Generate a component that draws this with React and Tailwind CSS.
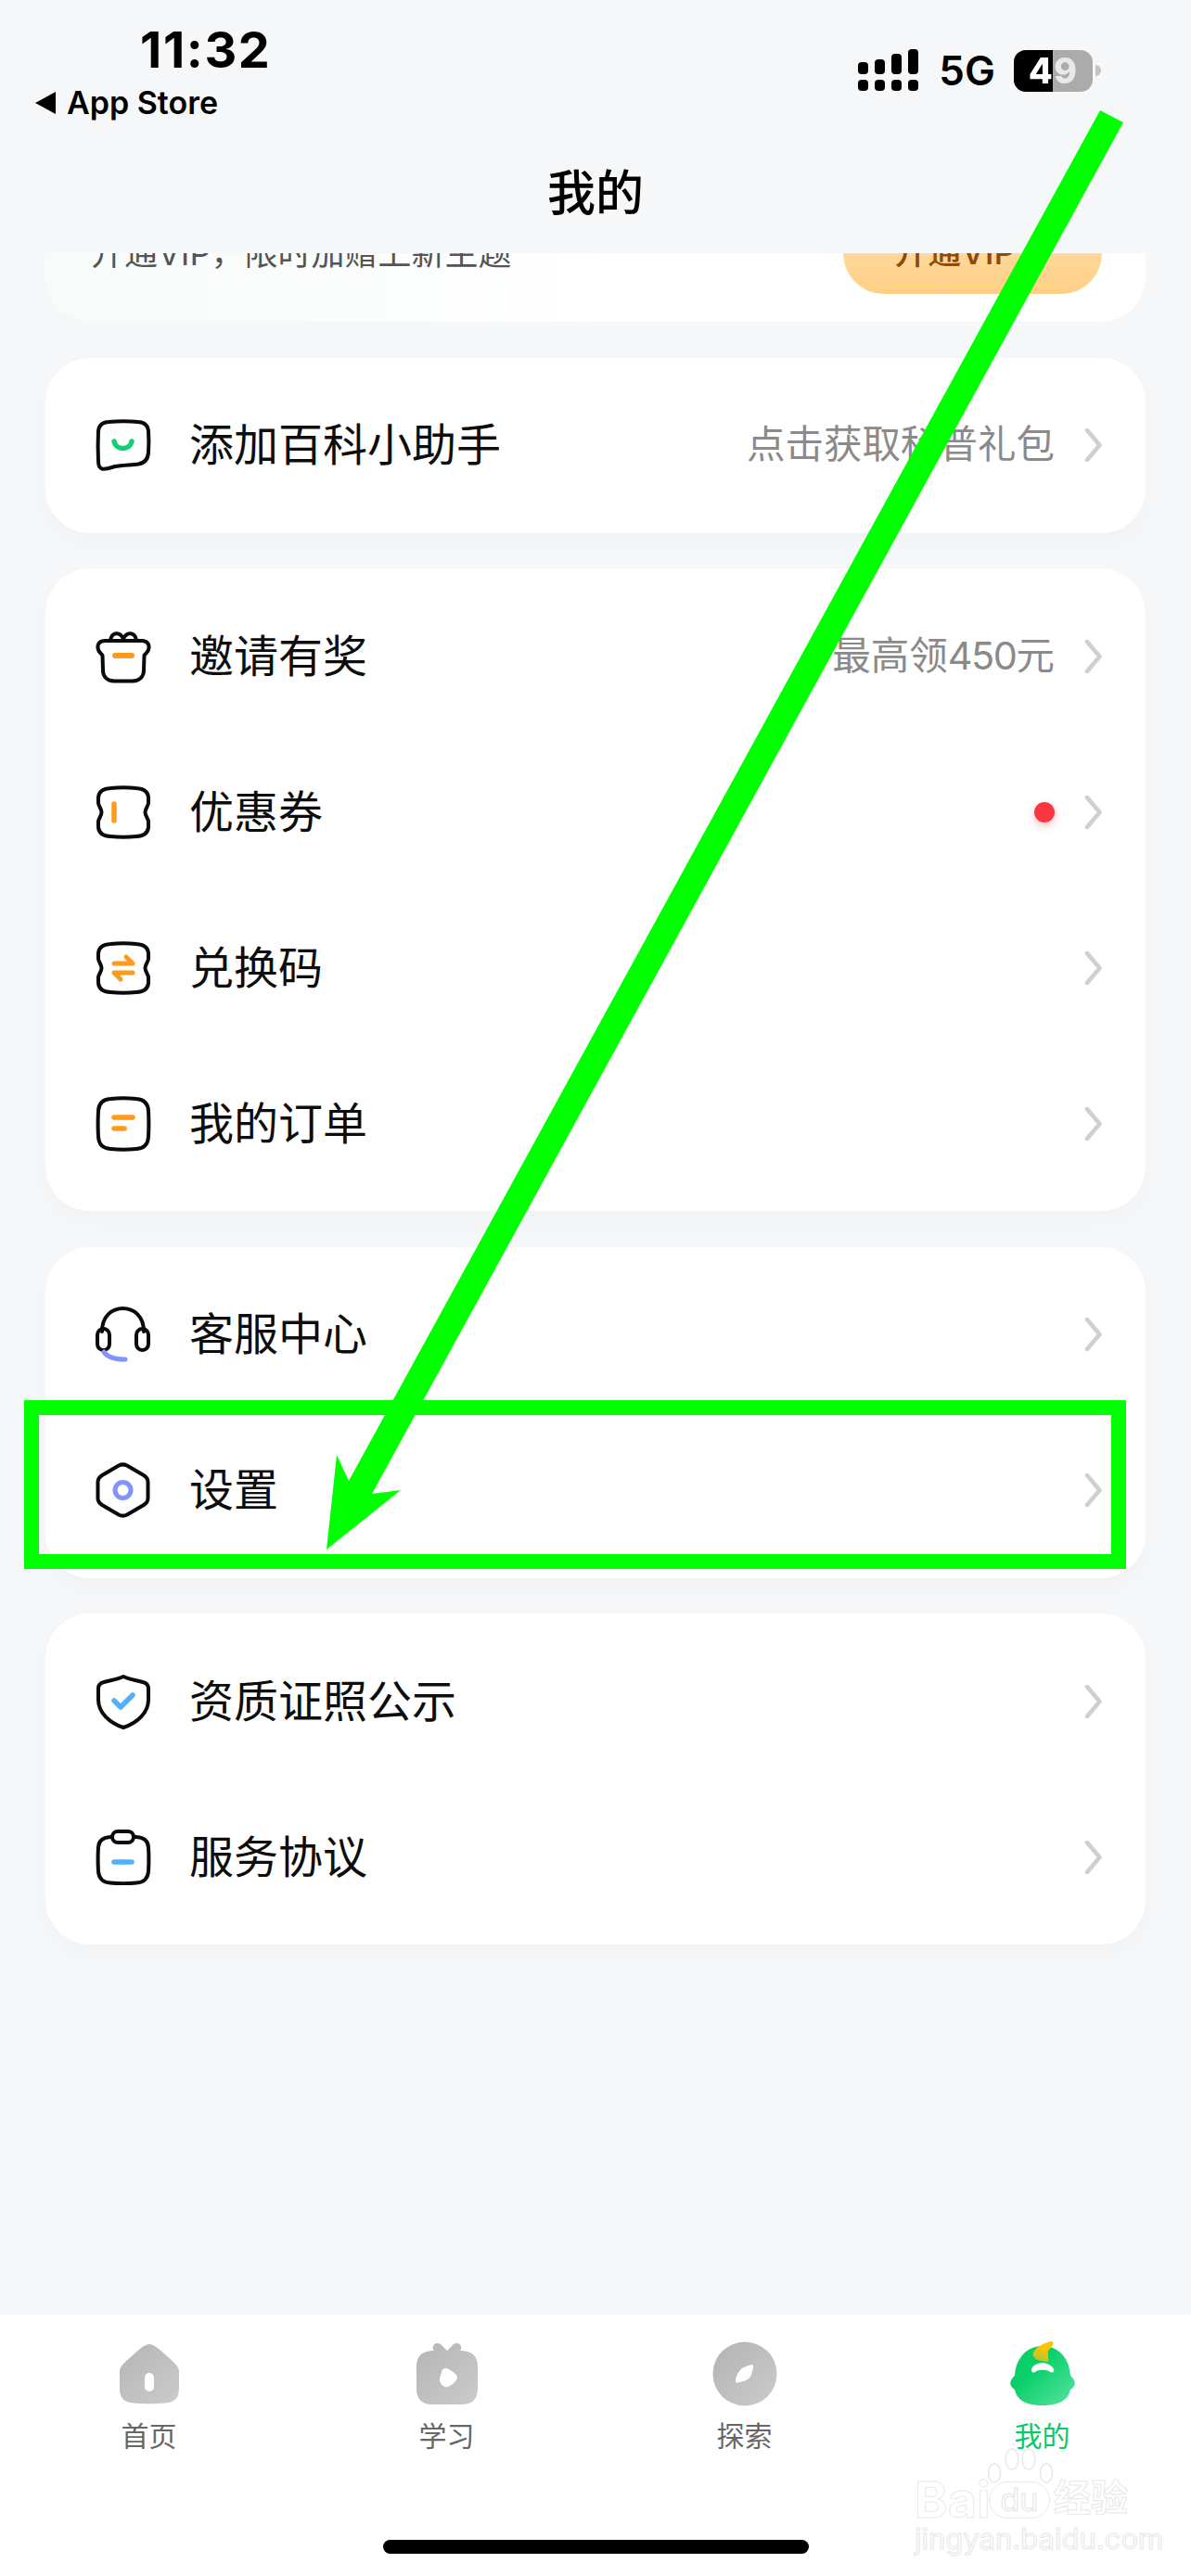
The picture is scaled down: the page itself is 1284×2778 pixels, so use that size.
const iconStroke = { fill: 'none', stroke: '#0a0a0a', strokeWidth: 4, strokeLinecap: 'round', strokeLinejoin: 'round' }

function Accent({ d, color, w = 5.5 }) {
  return <path d={d} fill="none" stroke={color} strokeWidth={w} strokeLinecap="round" strokeLinejoin="round" />
}

const couponPath =
  'M16 4 C25 3 35 3 44 4 C52 4.5 56.5 8 57 14 V20 C57 23 53.5 26 53.5 30 C53.5 34 57 37 57 40 V46 C56.5 52 52 55.5 44 56 C35 57 25 57 16 56 C8 55.5 3.5 52 3 46 V40 C3 37 6.5 34 6.5 30 C6.5 26 3 23 3 20 V14 C3.5 8 8 4.5 16 4 Z'

const squirclePath =
  'M16 3 C25 2 35 2 44 3 C52 3.5 56.5 8 57 16 C57.5 25 57.5 35 57 44 C56.5 52 52 56.5 44 57 C35 58 25 58 16 57 C8 56.5 3.5 52 3 44 C2.5 35 2.5 25 3 16 C3.5 8 8 3.5 16 3 Z'

const icons = {
  assistant: (
    <>
      <path {...iconStroke} d="M14 5 C24 4 36 4 46 5 C53 5.5 56.5 9 57 15 C57.5 22 57.5 31 57 38 C56.5 46 52 49.5 46 50.5 C38 51.5 28 51.5 21 53 C16 54.5 11 56.5 7 55.5 C3.5 54.5 3 51 3 47 C2.5 36 2.5 25 3 15 C3.5 9 7 5.5 14 5 Z" />
      <Accent d="M20 26 C22 36 37 36 39 26" color="#14cf72" />
    </>
  ),
  gift: (
    <>
      <path {...iconStroke} d="M10 13 H50 C55 13 58 16 57.5 21 C57 26 53 27 52.5 29 L52 45 C52 52 47 56 40 56.5 H20 C13 56 8 52 8 45 L7.5 29 C7 27 3 26 2.5 21 C2 16 5 13 10 13 Z" />
      <path {...iconStroke} d="M16 13 C17 4 26 2 30 11 C34 2 43 4 44 13" />
      <Accent d="M21 29 H39" color="#ff9a1a" w={6} />
    </>
  ),
  coupon: (
    <>
      <path {...iconStroke} d={couponPath} />
      <Accent d="M20 21 V39" color="#ff9a1a" />
    </>
  ),
  exchange: (
    <>
      <path {...iconStroke} d={couponPath} />
      <Accent d="M20 25 H40 L33 18" color="#ff9a1a" w={5} />
      <Accent d="M40 35 H20 L27 42" color="#ff9a1a" w={5} />
    </>
  ),
  order: (
    <>
      <path {...iconStroke} d={squirclePath} />
      <Accent d="M20 23 H40" color="#ff9a1a" />
      <Accent d="M20 35 H31" color="#ff9a1a" />
    </>
  ),
  headset: (
    <>
      <path {...iconStroke} d="M7 27 C7 10 18 2 29.5 2 C41 2 52 10 52 27" />
      <rect {...iconStroke} x="2" y="24" width="13" height="23" rx="6.5" />
      <rect {...iconStroke} x="44" y="24" width="13" height="23" rx="6.5" />
      <Accent d="M9 49 C13 55 20 57 32 57" color="#8292ff" w={5} />
    </>
  ),
  settings: (
    <>
      <path {...iconStroke} d="M25 3.5 C28 2 31 2 34 3.5 L52 14 C55 16 56.5 18 56.5 21 V39 C56.5 42 55 44 52 46 L34 56.5 C31 58 28 58 25 56.5 L7 46 C4 44 2.5 42 2.5 39 V21 C2.5 18 4 16 7 14 Z" />
      <circle cx="29.5" cy="30" r="8.5" fill="none" stroke="#8292ff" strokeWidth="5" />
    </>
  ),
  shield: (
    <>
      <path {...iconStroke} d="M30 3 C36 6 44 7 51 9 C55 10 57 12 57 16 V28 C57 42 45 53 30 58 C15 53 3 42 3 28 V16 C3 12 5 10 9 9 C16 7 24 6 30 3 Z" />
      <Accent d="M20 29 L27 36 L40 23" color="#4fb0ff" />
    </>
  ),
  clipboard: (
    <>
      <path {...iconStroke} d="M16 8 C25 7 35 7 44 8 C52 8.5 56.5 12 57 19 C57.5 27 57.5 37 57 45 C56.5 53 52 57 44 57.5 C35 58.5 25 58.5 16 57.5 C8 57 3.5 53 3 45 C2.5 37 2.5 27 3 19 C3.5 12 8 8.5 16 8 Z" />
      <rect {...iconStroke} x="18" y="2" width="23" height="12" rx="6" fill="#ffffff" />
      <Accent d="M20 35 H39" color="#4fb0ff" />
    </>
  ),
}

function Chevron() {
  return (
    <svg width="20" height="36" viewBox="0 0 20 36" className="shrink-0">
      <path d="M3 2 L16.5 18 L3 34" fill="none" stroke="#cfcfcf" strokeWidth="4.5" strokeLinecap="round" strokeLinejoin="round" />
    </svg>
  )
}

function Row({ icon, label, hint, dot }) {
  return (
    <div className="flex h-[168px] items-center pl-[54px] pr-[46px]">
      <svg width="60" height="60" viewBox="0 0 60 60" className="shrink-0">
        {icons[icon]}
      </svg>
      <span className="ml-[41px] text-[48px] leading-none text-[#0d0d0d]">{label}</span>
      <div className="ml-auto flex items-center gap-[32px]">
        {hint && <span className="text-[41.5px] leading-none text-[#8a8a8a]">{hint}</span>}
        {dot && <span className="h-[22px] w-[22px] rounded-full bg-[#fb3640] shadow-[0_4px_10px_rgba(251,54,64,0.3)]" />}
        <Chevron />
      </div>
    </div>
  )
}

function Card({ children }) {
  return <div className="rounded-[48px] bg-white py-[10.5px] shadow-[0_10px_24px_rgba(30,40,60,0.025)]">{children}</div>
}

function SignalDots() {
  const rows = [
    [0, 67, 11, 13],
    [18, 64, 11, 16],
    [36, 58, 11, 22],
    [54, 53, 11, 27],
  ]
  return (
    <svg width="66" height="46" viewBox="0 53 66 46">
      {rows.map(([x, y, w, h]) => (
        <g key={x} fill="#000">
          <rect x={x} y={y} width={w} height={h} rx="4" />
          <rect x={x} y="86" width={w} height="12" rx="4" />
        </g>
      ))}
    </svg>
  )
}

function Battery() {
  return (
    <div className="flex items-center">
      <div className="relative flex h-[45px] w-[85px] overflow-hidden rounded-[13px] bg-[#ababab]">
        <div className="w-[42px] bg-black" />
        <span className="absolute inset-0 flex items-center justify-center text-[38px] font-extrabold leading-none tracking-[1px] text-transparent bg-[linear-gradient(90deg,#ffffff_50%,#e9e9e9_50%)] bg-clip-text">
          49
        </span>
      </div>
      <div className="ml-[3px] h-[12px] w-[6px] rounded-r-full bg-[#c3c3c3]" />
    </div>
  )
}

function StatusBar() {
  return (
    <div className="flex items-start justify-between pr-[97px]">
      <div className="flex flex-col">
        <span className="ml-[151px] mt-[24px] h-[59px] text-[54px] font-bold leading-[59px] tracking-[1.6px] text-black">11:32</span>
        <div className="ml-[38px] mt-[8px] flex items-center gap-[12px]">
          <span className="h-0 w-0 border-y-[12px] border-r-[22px] border-y-transparent border-r-black" />
          <span className="text-[34px] font-semibold leading-[40px] text-black">App Store</span>
        </div>
      </div>
      <div className="mt-[53px] flex items-center">
        <SignalDots />
        <span className="ml-[21px] text-[44px] font-semibold leading-[45px] text-black">5G</span>
        <div className="ml-[20px]">
          <Battery />
        </div>
      </div>
    </div>
  )
}

function TabHome() {
  return (
    <svg width="66" height="66" viewBox="0 0 66 66">
      <defs>
        <linearGradient id="tabHome" x1="0" y1="0" x2="1" y2="1">
          <stop offset="0" stopColor="#b5b5b5" />
          <stop offset="1" stopColor="#cbcbcb" />
        </linearGradient>
      </defs>
      <path d="M33 1 C38 1 43 6 50 12 C56 18 65 24 65 30 V49 C65 59 60 64 50 64.5 C40 65.5 26 65.5 16 64.5 C6 64 1 59 1 49 V30 C1 24 10 18 16 12 C23 6 28 1 33 1 Z" fill="url(#tabHome)" />
      <rect x="28" y="32" width="10" height="20" rx="5" fill="#fff" />
    </svg>
  )
}

function TabLearn() {
  return (
    <svg width="68" height="68" viewBox="0 0 68 68">
      <defs>
        <linearGradient id="tabLearn" x1="0" y1="0" x2="1" y2="1">
          <stop offset="0" stopColor="#b5b5b5" />
          <stop offset="1" stopColor="#cbcbcb" />
        </linearGradient>
      </defs>
      <path d="M20 9 C16 4 22 -1 27 2 L34 9 L41 2 C46 -1 52 4 48 9 C60 9 67 14 67 26 V50 C67 61 61 67 50 67 H18 C7 67 1 61 1 50 V26 C1 14 8 9 20 9 Z" fill="url(#tabLearn)" />
      <path d="M28 33 C28 28 32 27 36 29 C41 32 45 35 45 38 C45 41 40 46 35 48 C31 49 27 46 26 41 C26 38 27 35 28 33 Z" fill="#fff" />
    </svg>
  )
}

function TabExplore() {
  return (
    <svg width="70" height="70" viewBox="0 0 70 70">
      <defs>
        <linearGradient id="tabExplore" x1="0" y1="0" x2="1" y2="1">
          <stop offset="0" stopColor="#b3b3b3" />
          <stop offset="1" stopColor="#cbcbcb" />
        </linearGradient>
      </defs>
      <circle cx="35" cy="35" r="34.5" fill="url(#tabExplore)" />
      <path d="M30 31 C32 28 37 27 42 25 C44 25 44.5 26 44 28 C43 33 42 39 38 41 C35 43 31 43.5 27 44.5 C25.5 45 25 44 25 42 C25.5 38 27 34 30 31 Z" fill="#fff" />
    </svg>
  )
}

function TabMine() {
  return (
    <svg width="72" height="70" viewBox="0 0 72 70">
      <defs>
        <linearGradient id="tabMine" x1="0.2" y1="0.2" x2="1" y2="1">
          <stop offset="0.2" stopColor="#08cf68" />
          <stop offset="1" stopColor="#58e4a0" />
        </linearGradient>
        <linearGradient id="tabMineTuft" x1="0.7" y1="0" x2="0.4" y2="1">
          <stop offset="0.4" stopColor="#ffc107" />
          <stop offset="1" stopColor="#a8c830" />
        </linearGradient>
      </defs>
      <path d="M36 5 C52 5 65 17 66 37 C70 40 72 45 70 48 C69 50 67 51 66 52 C64 62 56 69 36 69 C16 69 8 62 6 52 C5 51 3 50 2 48 C0 45 2 40 6 37 C7 17 20 5 36 5 Z" fill="url(#tabMine)" />
      <path d="M26 12 C29 6 38 1 46 0 C50 1 45 8 42 10 C41 14 43 18 42 22 C36 21 24 21 26 12 Z" fill="url(#tabMineTuft)" />
      <path d="M24 30 C27 21 44 21 48 30 C49 33 47 34 44 33 C41 30 31 30 28 33 C26 34 23 33 24 30 Z" fill="#fff" />
    </svg>
  )
}

function Tab({ icon, label, active }) {
  return (
    <div className="flex flex-col items-center">
      <div className="flex h-[70px] items-center justify-center">{icon}</div>
      <span className={`mt-[12px] text-[30px] leading-[40px] ${active ? 'text-[#0bc868]' : 'text-[#666666]'}`}>{label}</span>
    </div>
  )
}

function Watermark() {
  const outline = '[-webkit-text-stroke:1px_#e8e8e8] text-white'
  return (
    <div className="pointer-events-none absolute left-[986px] top-[2640px] h-[112px] w-[232px]">
      <svg width="72" height="44" viewBox="0 0 72 44" className="absolute left-[79px] top-0">
        <g fill="#fff" stroke="#e8e8e8" strokeWidth="1.5">
          <ellipse cx="7" cy="27" rx="6.5" ry="10" />
          <ellipse cx="26" cy="12" rx="7" ry="11" />
          <ellipse cx="44" cy="12" rx="7" ry="11" />
          <ellipse cx="63" cy="27" rx="6.5" ry="10" />
        </g>
      </svg>
      <span className={`absolute left-0 top-[26px] text-[54px] font-bold leading-[60px] ${outline}`}>Bai</span>
      <span className="absolute left-[80px] top-[36px] flex h-[40px] w-[66px] items-center justify-center rounded-[20px] border-[1.5px] border-[#e8e8e8] bg-white text-[34px] leading-none text-white [-webkit-text-stroke:1px_#e4e4e4]">du</span>
      <span className={`absolute left-[150px] top-[32px] text-[40px] font-bold leading-[44px] ${outline}`}>经验</span>
      <span className="absolute left-0 top-[80px] whitespace-nowrap text-[31px] leading-[36px] text-white [-webkit-text-stroke:1px_#e6e6e6]">jingyan.baidu.com</span>
    </div>
  )
}

// green annotation drawn on top of the screenshot
function Annotation() {
  return (
    <>
      <div className="pointer-events-none absolute left-[26px] top-[1510px] h-[182px] w-[1188px] border-x-[16px] border-y-[16px] border-[#00ff00]" />
      <svg width="1284" height="2778" viewBox="0 0 1284 2778" className="pointer-events-none absolute left-0 top-0">
        <polygon points="1186,119 1211,132 401,1611 432,1607 352,1671 363,1569 376,1597" fill="#00ff00" />
      </svg>
    </>
  )
}

export default function App() {
  return (
    <div className="relative flex h-[2778px] w-[1284px] flex-col overflow-hidden bg-[#f6f7f9] font-['Inter','Noto_Sans_CJK_SC',sans-serif]">
      <header className="h-[273px] shrink-0">
        <StatusBar />
        <h1 className="mt-[43px] text-center text-[52px] font-medium leading-[70px] text-black">我的</h1>
      </header>

      <main className="min-h-0 flex-1 overflow-hidden px-[49px]">
        <div className="-mt-[126px] flex flex-col gap-[38.5px]">
          <div className="flex h-[200px] items-start justify-between rounded-[48px] bg-gradient-to-r from-[#f7fbfa] via-white to-white pl-[49px] pr-[47px] pt-[107px]">
            <span className="mt-[-5px] text-[36px] leading-[48px] text-[#555555]">开通VIP，限时加赠上新主题</span>
            <span className="-mt-[25px] flex h-[88px] w-[279px] items-center justify-center rounded-[44px] bg-gradient-to-b from-[#ffe2ae] to-[#ffcf85] pb-[3px] pr-[38px] text-[36px] font-medium leading-none text-[#8f4a07]">开通VIP</span>
          </div>

          <Card>
            <Row icon="assistant" label="添加百科小助手" hint="点击获取科普礼包" />
          </Card>

          <Card>
            <Row icon="gift" label="邀请有奖" hint={<>最高领<span className="tracking-[-1.5px]">450</span>元</>} />
            <Row icon="coupon" label="优惠券" dot />
            <Row icon="exchange" label="兑换码" />
            <Row icon="order" label="我的订单" />
          </Card>

          <Card>
            <Row icon="headset" label="客服中心" />
            <Row icon="settings" label="设置" />
          </Card>

          <Card>
            <Row icon="shield" label="资质证照公示" />
            <Row icon="clipboard" label="服务协议" />
          </Card>
        </div>
      </main>

      <nav className="h-[282px] shrink-0 bg-white pt-[29px]">
        <div className="grid grid-cols-4">
          <Tab icon={<TabHome />} label="首页" />
          <Tab icon={<TabLearn />} label="学习" />
          <Tab icon={<TabExplore />} label="探索" />
          <Tab icon={<TabMine />} label="我的" active />
        </div>
        <div className="mx-auto mt-[92px] h-[15px] w-[459px] rounded-full bg-black" />
      </nav>

      <Watermark />
      <Annotation />
    </div>
  )
}
